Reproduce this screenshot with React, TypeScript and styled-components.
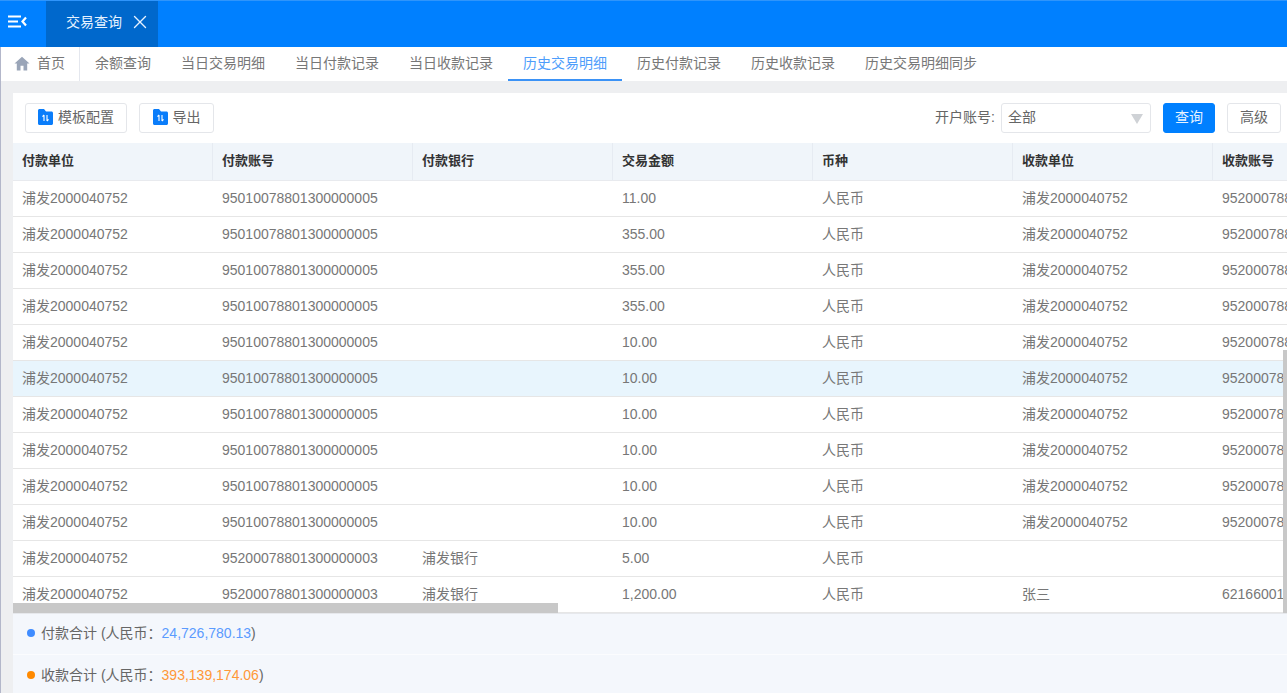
import React from "react";
import styled, { createGlobalStyle } from "styled-components";
import { X } from "lucide-react";

const Global = createGlobalStyle`
  html, body {
    margin: 0;
    padding: 0;
    height: 100%;
    overflow: hidden;
    background: #eeeff1;
    font-family: "Liberation Sans", "Noto Sans CJK SC", sans-serif;
    font-size: 14px;
    line-height: 20px;
    color: #666;
  }
  * { box-sizing: border-box; }
`;

const Page = styled.div`
  width: 1287px;
  height: 693px;
  display: flex;
  flex-direction: column;
  overflow: hidden;
`;

const TopBar = styled.div`
  height: 47px;
  flex: none;
  display: flex;
  background: #0080ff;
  border-top: 1px solid #2f95fb;
`;

const MenuButton = styled.div`
  width: 46px;
  display: flex;
  align-items: center;
  padding: 0 0 5px 8px;
`;

const AppTab = styled.div`
  width: 112px;
  background: #0068cc;
  color: #e6f2ff;
  display: flex;
  align-items: center;
  padding: 0 0 5px 20px;
  gap: 7px;
`;

const Body = styled.div`
  flex: 1;
  min-height: 0;
  display: flex;
  flex-direction: column;
  border-left: 1px solid #b3b7ca;
`;

const SubTabs = styled.div`
  height: 34px;
  flex: none;
  display: flex;
  background: #fff;
`;

const HomeTab = styled.div`
  width: 79px;
  display: flex;
  align-items: center;
  padding: 0 0 2px 13px;
  gap: 7px;
  border-right: 1px solid #e4e7ee;
  color: #777;
`;

const SubTab = styled.div<{ $active?: boolean }>`
  padding: 6px 15px 0;
  color: ${(p) => (p.$active ? "#4d9dfb" : "#777")};
  border-bottom: 2px solid ${(p) => (p.$active ? "#3b92f6" : "transparent")};
`;

const Content = styled.div`
  flex: 1;
  min-height: 0;
  margin: 12px 0 0 12px;
  display: flex;
  flex-direction: column;
  background: #fff;
`;

const Toolbar = styled.div`
  height: 50px;
  flex: none;
  display: flex;
  align-items: center;
  padding: 0 6px 1px 12px;
`;

const Button = styled.div<{ $primary?: boolean; $w: number }>`
  height: 30px;
  width: ${(p) => p.$w}px;
  display: flex;
  align-items: center;
  justify-content: center;
  gap: 5px;
  padding-bottom: 2px;
  border-radius: 3px;
  border: 1px solid ${(p) => (p.$primary ? "#0080ff" : "#e4e6ea")};
  background: ${(p) => (p.$primary ? "#0080ff" : "#fff")};
  color: ${(p) => (p.$primary ? "#e8f3ff" : "#666")};
  margin-right: 12px;
  &:last-child { margin-right: 0; }
`;

const Spacer = styled.div`
  flex: 1;
`;

const FieldLabel = styled.span`
  color: #666;
  margin: 0 6px 2px 0;
`;

const Select = styled.div`
  width: 150px;
  height: 30px;
  display: flex;
  align-items: center;
  justify-content: space-between;
  padding: 0 7px 2px 6px;
  border: 1px solid #e4e6ea;
  border-radius: 3px;
  color: #666;
  margin-right: 12px;
`;

const Caret = styled.span`
  width: 0;
  height: 0;
  margin-top: 4px;
  border-left: 6px solid transparent;
  border-right: 6px solid transparent;
  border-top: 10px solid #cfd2d6;
`;

const TableWrap = styled.div`
  position: relative;
  flex: 1;
  min-height: 0;
  overflow: hidden;
`;

const Table = styled.table`
  width: 1400px;
  table-layout: fixed;
  border-collapse: separate;
  border-spacing: 0;
`;

const Th = styled.th`
  width: 200px;
  height: 38px;
  padding: 0 0 2px 9px;
  text-align: left;
  font-size: 13px;
  font-weight: 700;
  color: #333;
  background: #f0f5fa;
  border-right: 1px solid #e6ebf2;
  border-bottom: 1px solid #e8eaee;
  white-space: nowrap;
  overflow: hidden;
`;

const Tr = styled.tr<{ $hl?: boolean }>`
  background: ${(p) => (p.$hl ? "#e8f5fd" : "#fff")};
`;

const Td = styled.td`
  height: 36px;
  padding: 0 0 1px 9px;
  border-bottom: 1px solid #e6e6e6;
  color: #777;
  white-space: nowrap;
  overflow: hidden;
`;

const HScroll = styled.div`
  position: absolute;
  left: 0;
  bottom: 0;
  width: 545px;
  height: 10px;
  background: #c8c8c8;
`;

const VScroll = styled.div`
  position: absolute;
  right: 0;
  bottom: 0;
  width: 4px;
  height: 263px;
  background: #c8c8c8;
`;

const Footer = styled.div`
  height: 80px;
  flex: none;
  display: flex;
  flex-direction: column;
  background: #f4f7fc;
  border-top: 1px solid #e6e8ec;
`;

const Total = styled.div<{ $last?: boolean }>`
  height: ${(p) => (p.$last ? 38 : 41)}px;
  flex: none;
  display: flex;
  align-items: center;
  padding-left: 14px;
  padding-top: ${(p) => (p.$last ? 2 : 0)}px;
  padding-bottom: ${(p) => (p.$last ? 0 : 2)}px;
  color: #666;
  border-bottom: ${(p) => (p.$last ? "none" : "1px solid #fbfcfe")};
`;

const Dot = styled.span<{ $c: string }>`
  width: 8px;
  height: 8px;
  border-radius: 50%;
  background: ${(p) => p.$c};
  margin-right: 6px;
`;

const Amount = styled.span<{ $c: string }>`
  color: ${(p) => p.$c};
`;

const FolderIcon = () => (
  <svg width="15" height="16" viewBox="0 0 15 16">
    <path d="M0 1.500C0 .7.7 0 1.500 0H6l2 2.500h5.500c.8 0 1.500.7 1.500 1.500v10.500c0 .8-.7 1.500-1.500 1.500h-12C.7 16 0 15.300 0 14.500z" fill="#0a7dfa" />
    <path d="M6 6v6M6 6L4.500 7.600M9 12V6M9 12l1.500-1.600" stroke="#fff" strokeWidth="1.100" fill="none" />
  </svg>
);

const HomeIcon = () => (
  <svg width="16" height="15" viewBox="0 0 16 15">
    <path d="M8 .8L.5 7.600h2.300V14.500h3.700V9.800h3V14.500h3.700V7.600h2.300z" fill="#9aa5b8" />
  </svg>
);

const MenuIcon = () => (
  <svg width="19" height="13" viewBox="0 0 19 13">
    <path d="M0 1.500h13M0 6.500h10M0 11.500h13" stroke="#fff" strokeWidth="2.200" fill="none" />
    <path d="M18 2.500L14.500 6.500L18 10.500" stroke="#fff" strokeWidth="2.200" fill="none" />
  </svg>
);

const tabs = ["余额查询", "当日交易明细", "当日付款记录", "当日收款记录", "历史交易明细", "历史付款记录", "历史收款记录", "历史交易明细同步"];
const headers = ["付款单位", "付款账号", "付款银行", "交易金额", "币种", "收款单位", "收款账号"];

const payer = "浦发2000040752";
const acct = "95010078801300000005";
const acct2 = "95200078801300000003";
const recvAcct = "95200078801300000001";

type Row = [string, string, string, string, string];
const rows: Row[] = [
  [acct, "", "11.00", payer, recvAcct],
  [acct, "", "355.00", payer, recvAcct],
  [acct, "", "355.00", payer, recvAcct],
  [acct, "", "355.00", payer, recvAcct],
  [acct, "", "10.00", payer, recvAcct],
  [acct, "", "10.00", payer, recvAcct],
  [acct, "", "10.00", payer, recvAcct],
  [acct, "", "10.00", payer, recvAcct],
  [acct, "", "10.00", payer, recvAcct],
  [acct, "", "10.00", payer, recvAcct],
  [acct2, "浦发银行", "5.00", "", ""],
  [acct2, "浦发银行", "1,200.00", "张三", "6216600100001234567"],
];

export default function App() {
  return (
    <Page>
      <Global />
      <TopBar>
        <MenuButton><MenuIcon /></MenuButton>
        <AppTab>
          交易查询
          <X size={22} color="#e6f2ff" strokeWidth={1.5} />
        </AppTab>
      </TopBar>
      <Body>
        <SubTabs>
          <HomeTab><HomeIcon />首页</HomeTab>
          {tabs.map((t, i) => (
            <SubTab key={t + i} $active={i === 4}>{t}</SubTab>
          ))}
        </SubTabs>
        <Content>
          <Toolbar>
            <Button $w={102}><FolderIcon />模板配置</Button>
            <Button $w={75}><FolderIcon />导出</Button>
            <Spacer />
            <FieldLabel>开户账号:</FieldLabel>
            <Select>全部<Caret /></Select>
            <Button $primary $w={52}>查询</Button>
            <Button $w={54}>高级</Button>
          </Toolbar>
          <TableWrap>
            <Table>
              <thead>
                <tr>{headers.map((h) => <Th key={h}>{h}</Th>)}</tr>
              </thead>
              <tbody>
                {rows.map((r, i) => (
                  <Tr key={i} $hl={i === 5}>
                    <Td>{payer}</Td>
                    <Td>{r[0]}</Td>
                    <Td>{r[1]}</Td>
                    <Td>{r[2]}</Td>
                    <Td>人民币</Td>
                    <Td>{r[3]}</Td>
                    <Td>{r[4]}</Td>
                  </Tr>
                ))}
              </tbody>
            </Table>
            <HScroll />
            <VScroll />
          </TableWrap>
          <Footer>
            <Total><Dot $c="#3f8cff" />付款合计 (人民币：<Amount $c="#5b9bff">24,726,780.13</Amount>)</Total>
            <Total $last><Dot $c="#ff8a00" />收款合计 (人民币：<Amount $c="#ff9838">393,139,174.06</Amount>)</Total>
          </Footer>
        </Content>
      </Body>
    </Page>
  );
}
